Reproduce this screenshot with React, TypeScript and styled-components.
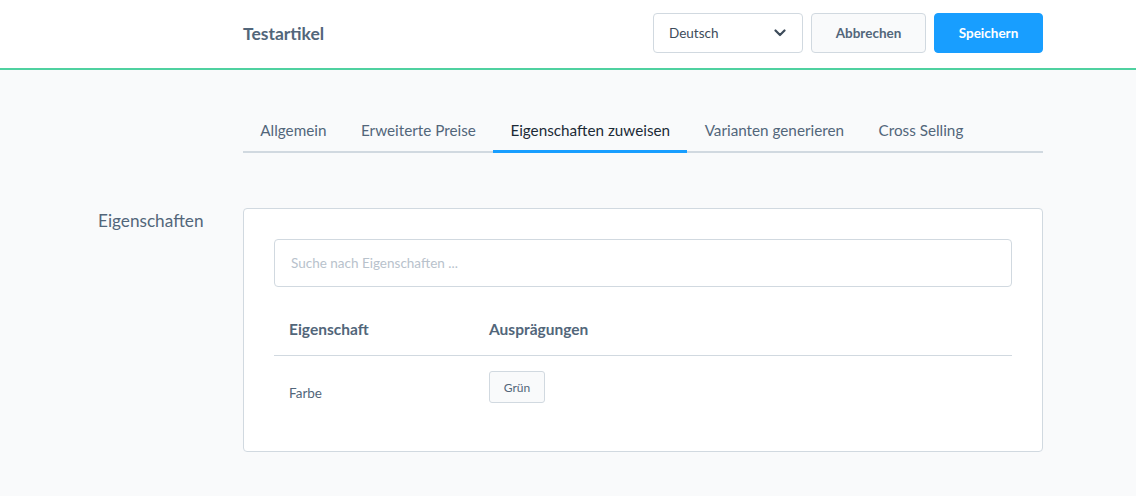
import React from 'react';
import styled, { createGlobalStyle } from 'styled-components';

const GlobalStyle = createGlobalStyle`
  html, body {
    margin: 0;
    padding: 0;
    background: #f9fafb;
    font-family: 'Lato', 'Liberation Sans', sans-serif;
    color: #52667a;
  }
  * { box-sizing: border-box; }
`;

const Header = styled.header`
  height: 70px;
  background: #fff;
  border-bottom: 2px solid #4fd1a0;
`;

const HeaderInner = styled.div`
  display: flex;
  align-items: center;
  height: 100%;
  padding: 0 93px 0 243px;
  padding-bottom: 2px;
`;

const Title = styled.h1`
  flex: 1;
  margin: 0;
  font-size: 17.5px;
  font-weight: 700;
  color: #52667a;
`;

const Actions = styled.div`
  display: flex;
  gap: 8px;
`;

const LangSelect = styled.div`
  display: flex;
  align-items: center;
  justify-content: space-between;
  width: 150px;
  height: 40px;
  padding: 0 16px 0 15px;
  border: 1px solid #d1d9e0;
  border-radius: 4px;
  background: #fff;
  font-size: 13.5px;
  color: #3d4b5a;
`;

const Button = styled.button<{ $primary?: boolean; $width: number }>`
  width: ${(p) => p.$width}px;
  height: 40px;
  border-radius: 4px;
  font-family: inherit;
  font-size: 13.5px;
  font-weight: 700;
  border: 1px solid ${(p) => (p.$primary ? '#189eff' : '#d1d9e0')};
  background: ${(p) => (p.$primary ? '#189eff' : '#f9fafb')};
  color: ${(p) => (p.$primary ? '#fff' : '#52667a')};
`;

const Main = styled.main`
  padding: 0 93px 0 98px;
`;

const Tabs = styled.nav`
  display: flex;
  margin: 36px 0 0 145px;
  border-bottom: 2px solid #d1d9e0;
`;

const Tab = styled.div<{ $active?: boolean }>`
  padding: 15px 17.3px 10px;
  margin-bottom: -2px;
  font-size: 15.25px;
  line-height: 19px;
  color: ${(p) => (p.$active ? '#1c2a36' : '#52667a')};
  border-bottom: 3px solid ${(p) => (p.$active ? '#189eff' : 'transparent')};
`;

const Section = styled.section`
  display: grid;
  grid-template-columns: 145px 1fr;
  margin-top: 55px;
`;

const SectionLabel = styled.div`
  font-size: 17.2px;
  color: #52667a;
  padding-top: 2px;
`;

const Card = styled.div`
  background: #fff;
  border: 1px solid #d1d9e0;
  border-radius: 4px;
  padding: 30px 30px 31px;
`;

const Search = styled.div`
  height: 48px;
  display: flex;
  align-items: center;
  padding: 0 16px;
  border: 1px solid #d1d9e0;
  border-radius: 4px;
  font-size: 13.5px;
  color: #b8c2cc;
`;

const Table = styled.div`
  display: grid;
  grid-template-columns: 200px 1fr;
  margin-top: 17px;
`;

const HeadCell = styled.div`
  padding: 16px 15px 17px;
  font-size: 15.5px;
  font-weight: 700;
  color: #52667a;
  border-bottom: 1px solid #d1d9e0;
`;

const Cell = styled.div`
  padding: 15px 15px 17px;
  font-size: 13.5px;
  color: #52667a;
`;

const NameCell = styled(Cell)`
  padding-top: 29px;
`;

const Chip = styled.span`
  display: inline-flex;
  align-items: center;
  justify-content: center;
  width: 56px;
  height: 32px;
  border: 1px solid #d1d9e0;
  border-radius: 3px;
  background: #f9fafb;
  font-size: 12px;
  color: #52667a;
`;

const Chevron = () => (
  <svg width="12" height="8" viewBox="0 0 12 8" fill="none">
    <path d="M1.5 1.5L6 6l4.5-4.5" stroke="#3d4b5a" strokeWidth="2.2" strokeLinecap="round" strokeLinejoin="round" />
  </svg>
);

const tabs = ['Allgemein', 'Erweiterte Preise', 'Eigenschaften zuweisen', 'Varianten generieren', 'Cross Selling'];

export default function App() {
  return (
    <>
      <GlobalStyle />
      <Header>
        <HeaderInner>
          <Title>Testartikel</Title>
          <Actions>
            <LangSelect>
              Deutsch
              <Chevron />
            </LangSelect>
            <Button $width={115}>Abbrechen</Button>
            <Button $primary $width={109}>Speichern</Button>
          </Actions>
        </HeaderInner>
      </Header>
      <Main>
        <Tabs>
          {tabs.map((t) => (
            <Tab key={t} $active={t === 'Eigenschaften zuweisen'}>
              {t}
            </Tab>
          ))}
        </Tabs>
        <Section>
          <SectionLabel>Eigenschaften</SectionLabel>
          <Card>
            <Search>Suche nach Eigenschaften ...</Search>
            <Table>
              <HeadCell>Eigenschaft</HeadCell>
              <HeadCell>Ausprägungen</HeadCell>
              <NameCell>Farbe</NameCell>
              <Cell>
                <Chip>Grün</Chip>
              </Cell>
            </Table>
          </Card>
        </Section>
      </Main>
    </>
  );
}
